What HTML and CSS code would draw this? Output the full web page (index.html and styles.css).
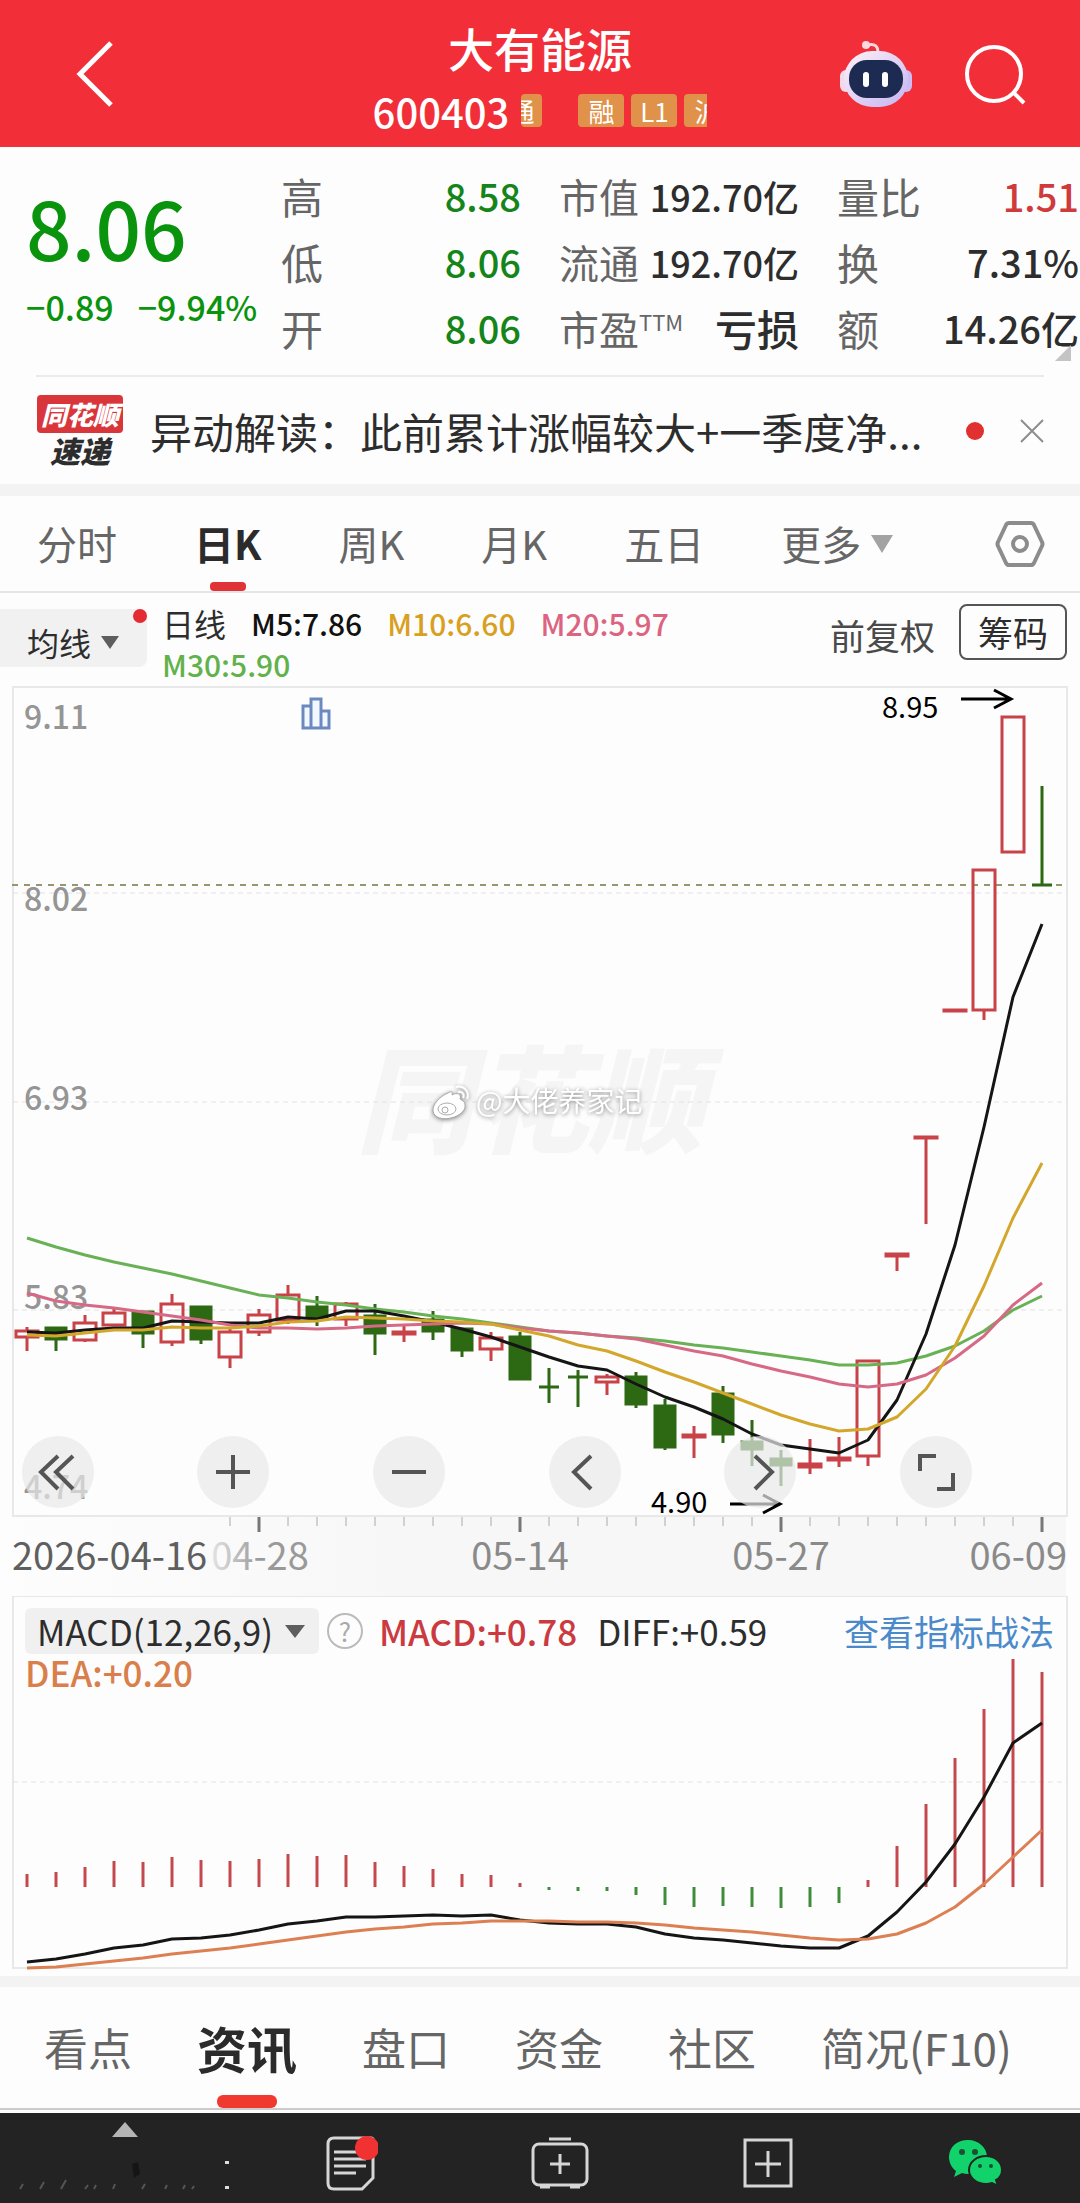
FILE: index.html
```html
<!DOCTYPE html>
<html lang="zh-CN">
<head>
<meta charset="utf-8">
<meta name="viewport" content="width=device-width, initial-scale=1">
<title>大有能源 600403</title>
<link rel="stylesheet" href="styles.css">
</head>
<body>
<header class="topbar">
  <button class="icon-btn back" aria-label="返回">
    <svg width="40" height="70" viewBox="0 0 40 70"><path d="M36 4 5 35l31 31" fill="none" stroke="#fff" stroke-width="5"/></svg>
  </button>
  <div class="stock">
    <h1 class="stock-name">大有能源</h1>
    <div class="stock-sub">
      <span class="stock-code">600403</span>
      <div class="tags">
        <span class="tag tag-cut-left">通</span>
        <span class="tag tag-margin">融</span>
        <span class="tag">L1</span>
        <span class="tag">沪</span>
      </div>
    </div>
  </div>
  <div class="top-actions">
    <button class="icon-btn" aria-label="智能助手">
      <svg width="72" height="68" viewBox="0 0 72 68">
        <defs><linearGradient id="shell" x1="0" y1="0" x2="1" y2="1"><stop offset="0" stop-color="#fff2f7"/><stop offset="1" stop-color="#c3b5f2"/></linearGradient></defs>
        <path d="M27 5c8-2 11 1 11 8" fill="none" stroke="#ffd9de" stroke-width="3"/>
        <circle cx="26" cy="5" r="4" fill="#ffd9de"/>
        <rect x="0" y="30" width="12" height="22" rx="6" fill="#f3d9ec"/>
        <rect x="60" y="30" width="12" height="22" rx="6" fill="#cdbcf4"/>
        <rect x="4" y="11" width="64" height="56" rx="28" fill="url(#shell)"/>
        <rect x="9" y="20" width="54" height="38" rx="18" fill="#1d2b52"/>
        <rect x="23" y="32" width="6" height="15" rx="3" fill="#fff"/>
        <rect x="42" y="32" width="6" height="15" rx="3" fill="#fff"/>
      </svg>
    </button>
    <button class="icon-btn" aria-label="搜索">
      <svg width="62" height="62" viewBox="0 0 62 62"><g fill="none" stroke="#fff" stroke-width="4"><circle cx="30" cy="31" r="27"/><path d="m49 49 11 11"/></g></svg>
    </button>
  </div>
</header>

<main>
<section class="quote">
  <div class="price">
    <div class="price-now">8.06</div>
    <div class="price-change"><span>−0.89</span><span>−9.94%</span></div>
  </div>
  <dl class="stats">
    <div><dt>高</dt><dd class="down">8.58</dd></div>
    <div><dt>低</dt><dd class="down">8.06</dd></div>
    <div><dt>开</dt><dd class="down">8.06</dd></div>
  </dl>
  <dl class="stats stats-mid">
    <div><dt>市值</dt><dd>192.70亿</dd></div>
    <div><dt>流通</dt><dd>192.70亿</dd></div>
    <div><dt>市盈<sup>TTM</sup></dt><dd class="loss">亏损</dd></div>
  </dl>
  <dl class="stats">
    <div><dt>量比</dt><dd class="up">1.51</dd></div>
    <div><dt>换</dt><dd>7.31%</dd></div>
    <div><dt>额</dt><dd>14.26亿</dd></div>
  </dl>
  <svg class="corner" width="16" height="16" viewBox="0 0 16 16"><path d="M16 0v16H0z" fill="#c4c4c4"/></svg>
</section>

<section class="news">
  <div class="news-logo">
    <span class="logo-top">同花顺</span>
    <span class="logo-bottom">速递</span>
  </div>
  <a class="news-title" href="#news">异动解读：此前累计涨幅较大+一季度净...</a>
  <span class="news-dot"></span>
  <button class="icon-btn" aria-label="关闭">
    <svg width="24" height="24" viewBox="0 0 24 24"><path d="m1 1 22 22M23 1 1 23" stroke="#8d8d8d" stroke-width="2"/></svg>
  </button>
</section>

<nav class="period">
  <a href="#m">分时</a>
  <a class="active" href="#d">日K</a>
  <a href="#w">周K</a>
  <a href="#mo">月K</a>
  <a href="#5d">五日</a>
  <button class="more">更多<svg width="22" height="18" viewBox="0 0 22 18"><path d="M0 0h22L11 18z" fill="#a3a3a3"/></svg></button>
  <button class="icon-btn gear" aria-label="设置">
    <svg width="50" height="48" viewBox="0 0 50 48"><g fill="none" stroke="#8c8c8c" stroke-width="4"><path d="M14 3h22q2 0 3 2l8 17q1 2 0 4l-8 17q-1 2-3 2H14q-2 0-3-2L3 26q-1-2 0-4l8-17q1-2 3-2z"/><circle cx="25" cy="24" r="7"/></g></svg>
  </button>
</nav>

<section class="ma">
  <button class="ma-select">均线<svg width="18" height="13" viewBox="0 0 18 13"><path d="M0 0h18L9 13z" fill="#5e5e5e"/></svg></button>
  <div class="ma-legend">
    <span class="ma-name">日线</span>
    <span class="m5">M5:7.86</span>
    <span class="m10">M10:6.60</span>
    <span class="m20">M20:5.97</span>
    <span class="m30">M30:5.90</span>
  </div>
  <button class="adjust">前复权</button>
  <button class="chips">筹码</button>
</section>

<section class="kline">
  <svg class="plot" viewBox="0 687 1080 910" role="img" aria-label="日K线图">
    <defs>
      <linearGradient id="axisFade" x1="0" x2="1"><stop offset="0" stop-color="#fdfdfd"/><stop offset=".4" stop-color="#f7f7f7"/></linearGradient>
      <linearGradient id="dateFade" x1="0" x2="1"><stop offset="0" stop-color="#e4e4e4"/><stop offset=".5" stop-color="#999"/></linearGradient>
    </defs>
    <rect x="0" y="1518" width="1066" height="79" fill="url(#axisFade)"/>
    <text class="brand-mark" x="356" y="1145">同花顺</text>
    <rect class="frame" x="13" y="688" width="1054" height="829"/>
    <path class="grid" d="M13 894H1067M13 1103H1067M13 1311H1067"/>
    <g class="y-labels">
      <text x="24" y="730">9.11</text>
      <text x="24" y="912">8.02</text>
      <text x="24" y="1111">6.93</text>
      <text x="24" y="1310">5.83</text>
      <text x="24" y="1500">4.74</text>
    </g>
    <path d="M12 886H1067" fill="none" stroke="#97976b" stroke-width="2" stroke-dasharray="6 6"/>
    <g fill="#f2f8ff" stroke="#6c89bf" stroke-width="3"><path d="M303 707h8v22h-8zM311 700h10v29h-10zM321 712h8v17h-8z"/></g>
    <g id="candles"></g>
    <g id="averages"></g>
    <g id="ticks"></g>
    <g class="mark">
      <text x="882" y="719">8.95</text>
      <text x="651" y="1514">4.90</text>
      <path d="M961 700h50M994 691l17 9-17 9M730 1505h50M763 1496l17 9-17 9"/>
    </g>
    <g class="dates">
      <text class="date-first" x="12" y="1571">2026-04-16</text>
      <text x="260" y="1571" text-anchor="middle" fill="url(#dateFade)">04-28</text>
      <text x="520" y="1571" text-anchor="middle">05-14</text>
      <text x="781" y="1571" text-anchor="middle">05-27</text>
      <text x="1067" y="1571" text-anchor="end">06-09</text>
    </g>
    <g class="poster">
      <g fill="#fff" stroke="#aaa" stroke-width="1">
        <path d="M448 1094c-8 3-16 12-15 18 1 7 10 9 18 7 9-2 15-8 14-13 0-4-4-5-5-6 2-5-3-7-8-4 1-4-1-4-4-2z"/>
        <ellipse cx="447" cy="1110" rx="9" ry="6"/>
        <circle cx="445" cy="1111" r="3"/>
        <path d="M456 1088c8-2 14 5 11 12M458 1093c4-1 7 2 5 6" fill="none" stroke="#fff" stroke-width="2"/>
      </g>
      <text x="476" y="1113">@大佬养家记</text>
    </g>
  </svg>
  <div class="controls">
    <button aria-label="快退"><svg viewBox="0 0 72 72"><path d="M36 20 19 36l17 17M51 20 34 36l17 17"/></svg></button>
    <button aria-label="放大"><svg viewBox="0 0 72 72"><path d="M36 19v34M19 36h34"/></svg></button>
    <button aria-label="缩小"><svg viewBox="0 0 72 72"><path d="M19 36h34"/></svg></button>
    <button aria-label="向左"><svg viewBox="0 0 72 72"><path d="M42 20 25 36l17 17"/></svg></button>
    <button aria-label="向右"><svg viewBox="0 0 72 72"><path d="m31 20 17 16-17 17"/></svg></button>
    <button aria-label="全屏"><svg viewBox="0 0 72 72"><path d="M20 35V20h16M53 37v16H37"/></svg></button>
  </div>
</section>

<section class="macd">
  <svg class="plot" viewBox="0 1597 1080 380" role="img" aria-label="MACD指标图">
    <rect class="frame" x="13" y="1597" width="1054" height="372"/>
    <path class="grid" d="M13 1783H1067"/>
    <g id="bars"></g>
    <g id="macdLines"></g>
  </svg>
  <div class="macd-head">
    <button class="macd-select">MACD(12,26,9)<svg width="20" height="13" viewBox="0 0 20 13"><path d="M0 0h20L10 13z" fill="#5e5e5e"/></svg></button>
    <button class="help" aria-label="指标说明">?</button>
    <span class="macd-value">MACD:+0.78</span>
    <span class="diff-value">DIFF:+0.59</span>
    <a class="macd-link" href="#guide">查看指标战法</a>
    <span class="dea-value">DEA:+0.20</span>
  </div>
</section>

<nav class="sections">
  <a href="#view">看点</a>
  <a class="active" href="#info">资讯</a>
  <a href="#book">盘口</a>
  <a href="#fund">资金</a>
  <a href="#bbs">社区</a>
  <a href="#f10">简况(F10)</a>
</nav>
</main>

<footer class="toolbar">
  <button class="index-btn" aria-label="指数">
    <svg width="220" height="86" viewBox="0 0 220 86">
      <path d="M98 22 111 7l13 15z" fill="#b5b5b5"/>
      <path d="M118 49l6-2 2 12-6 4z" fill="#151515"/>
      <path d="m6 74 3-5M26 74l4-7M47 74l5-9M71 74l3-4M80 74l2-4M99 74l2-5M128 74l3-5M151 74l2-4M169 74l2-4M178 74l2-3" stroke="#555" stroke-width="2"/>
      <path d="M211 46h4v3h-4zM211 71h4v3h-4z" fill="#ddd"/>
    </svg>
  </button>
  <button aria-label="笔记">
    <svg width="52" height="58" viewBox="0 0 52 58"><g fill="none" stroke="#d6d6d6" stroke-width="3"><path d="M8 4h37q2 0 2 2v38L36 55H8q-6 0-6-6V10q0-6 6-6z"/><path d="M8 18h24M8 25h32M8 32h32M8 39h22"/></g><circle cx="41" cy="14" r="12" fill="#f03232"/></svg>
  </button>
  <button aria-label="交易">
    <svg width="58" height="54" viewBox="0 0 58 54"><g fill="none" stroke="#d6d6d6" stroke-width="3"><rect x="2" y="8" width="54" height="41" rx="6"/><path d="M18 3h22M29 18v20M19 28h20M9 51h10M39 51h10"/></g></svg>
  </button>
  <button aria-label="加自选">
    <svg width="50" height="50" viewBox="0 0 50 50"><g fill="none" stroke="#d6d6d6" stroke-width="3"><path d="M2 2h46v46H2zM25 13v26M12 26h26"/></g></svg>
  </button>
  <button aria-label="微信分享">
    <svg width="56" height="48" viewBox="0 0 56 48">
      <path d="M20 1C9 1 1 8 1 18c0 6 3 11 7 14l-2 6 8-4q3 1 6 1c11 0 19-8 19-17S31 1 20 1z" fill="#12d36b"/>
      <path d="M38 17c-9 0-17 6-17 14s8 14 17 14q3 0 6-1l6 3-2-6c4-2 6-6 6-10 0-8-7-14-16-14z" fill="#12d36b" stroke="#232323" stroke-width="2"/>
      <g fill="#1d4f31"><circle cx="14" cy="13" r="3"/><circle cx="27" cy="13" r="3"/><circle cx="32" cy="27" r="2"/><circle cx="43" cy="27" r="2"/></g>
    </svg>
  </button>
</footer>
<script src="chart.js"></script>
</body>
</html>
```
FILE: styles.css
```css
* { box-sizing: border-box; }
body {
  margin: 0;
  background: #fdfdfd;
  color: #2d2d2d;
  font-family: "Noto Sans CJK SC", "Noto Sans", sans-serif;
}
button {
  margin: 0;
  padding: 0;
  border: 0;
  background: none;
  color: inherit;
  font: inherit;
  white-space: nowrap;
}
a { color: inherit; text-decoration: none; white-space: nowrap; }
svg { display: block; }
dl, dd, h1 { margin: 0; }
.icon-btn { display: flex; }
.up { color: #cf3a3c; }
.down { color: #15851a; }

.topbar {
  display: grid;
  grid-template-columns: 1fr auto 1fr;
  align-items: center;
  height: 147px;
  padding: 0 54px;
  background: #f22e38;
  color: #fff;
}
.back { padding-left: 21px; }
.stock { display: flex; flex-direction: column; gap: 4px; align-items: center; padding-top: 6px; }
.stock-name { font-size: 46px; font-weight: 500; line-height: 64px; }
.stock-sub { display: flex; align-items: center; gap: 12px; height: 56px; }
.stock-code { font-size: 40px; font-weight: 500; line-height: 56px; }
.tags { display: flex; gap: 7px; width: 186px; overflow: hidden; }
.tag {
  flex: none;
  width: 46px;
  border-radius: 4px;
  background: #e0914a;
  font-size: 26px;
  line-height: 33px;
  text-align: center;
}
.tag-cut-left { width: 21px; direction: rtl; padding-right: 8px; overflow: hidden; }
.tag-margin { margin-left: 29px; }
.top-actions { display: flex; align-items: center; justify-content: flex-end; gap: 52px; }

.quote {
  position: relative;
  display: grid;
  grid-template-columns: minmax(0, 243fr) minmax(0, 240fr) minmax(0, 240fr) minmax(0, 242fr);
  column-gap: 38px;
  padding: 16px 1px 14px 0;
}
.price { padding: 12px 0 0 26px; color: #0a930d; font-weight: 500; white-space: nowrap; }
.price-now { font-size: 80px; line-height: 102px; }
.price-change { display: flex; gap: 24px; font-size: 34px; line-height: 60px; }
.stats div { display: flex; align-items: center; justify-content: space-between; line-height: 66px; white-space: nowrap; }
.stats dt { font-size: 42px; color: #666; }
.stats-mid dt { font-size: 40px; }
.stats dd { font-size: 38px; font-weight: 500; }
.stats-mid dd { font-size: 36px; }
.stats .loss { font-size: 42px; }
.stats sup { font-size: 22px; line-height: 22px; }
.corner { position: absolute; right: 9px; bottom: 14px; }

.news {
  display: flex;
  align-items: center;
  height: 109px;
  margin: 0 36px;
  border-top: 2px solid #ececec;
}
.news-logo { display: flex; flex-direction: column; align-items: center; width: 88px; margin-right: 26px; font-style: italic; font-weight: 900; }
.logo-top { width: 86px; border-radius: 4px; background: #d9363c; color: #fff; font-size: 26px; line-height: 38px; text-align: center; }
.logo-bottom { font-size: 30px; line-height: 34px; }
.news-title { flex: 1; font-size: 42px; line-height: 60px; }
.news-dot { width: 18px; height: 18px; margin-right: 36px; border-radius: 50%; background: #e03030; }

.period {
  display: flex;
  align-items: center;
  gap: 77px;
  height: 109px;
  padding: 0 35px 0 37px;
  border-top: 12px solid #f3f3f3;
  border-bottom: 2px solid #e6e6e6;
  color: #666;
  font-size: 40px;
  line-height: 95px;
}
.period .active, .sections .active { position: relative; color: #2b2b2b; font-weight: 700; }
.period .active::after, .sections .active::after {
  content: "";
  position: absolute;
  left: 50%;
  bottom: 0;
  width: 36px;
  height: 9px;
  border-radius: 4px;
  background: #e03338;
  transform: translateX(-50%);
}
.more { display: flex; align-items: center; gap: 10px; }
.gear { margin-left: auto; }

.ma { display: flex; align-items: flex-start; height: 93px; padding: 10px 13px 0 0; }
.ma-select {
  position: relative;
  display: flex;
  align-items: center;
  gap: 10px;
  height: 58px;
  margin: 6px 15px 0 0;
  padding: 8px 28px 0 27px;
  border-radius: 0 8px 8px 0;
  background: #f1f1f1;
  font-size: 32px;
  line-height: 48px;
}
.ma-select::after {
  content: "";
  position: absolute;
  top: 0;
  right: 0;
  width: 14px;
  height: 14px;
  border-radius: 50%;
  background: #e62a34;
}
.ma-legend { display: flex; flex-wrap: wrap; column-gap: 25px; width: 50%; font-size: 30px; font-weight: 500; line-height: 41px; }
.ma-name { font-size: 32px; font-weight: 400; }
.m5 { color: #111; }
.m10 { color: #d8a021; }
.m20 { color: #dc6480; }
.m30 { color: #62b24c; }
.adjust { margin: 6px 24px 0 auto; color: #4a4a4a; font-size: 35px; line-height: 52px; }
.chips { margin-top: 1px; padding: 0 17px; border: 2px solid #555; border-radius: 8px; font-size: 35px; line-height: 52px; }

.kline, .macd { position: relative; }
.plot { width: 100%; height: auto; }
.frame { fill: none; stroke: #e8e8e8; stroke-width: 2; }
.grid { fill: none; stroke: #e2e2e2; stroke-width: 1; stroke-dasharray: 5 4; }
.brand-mark { fill: #f5f5f5; font-size: 116px; font-weight: 900; font-style: italic; }
.y-labels { fill: #959595; font-size: 32px; font-weight: 500; }
.mark { fill: #000; font-size: 29px; }
.mark path { fill: none; stroke: #000; stroke-width: 3; }
.dates { fill: #8a8a8a; font-size: 38px; }
.date-first { fill: #5f5f5f; }
.poster { filter: drop-shadow(0 1px 2px #888); }
.poster text { fill: #fff; font-size: 28px; }
.tick { stroke: #aaa; stroke-width: 1; }
.tick-major { stroke: #777; stroke-width: 3; }
.rise { fill: none; stroke: #c84247; stroke-width: 3; }
.fall { fill: #2d6912; stroke: #2d6912; stroke-width: 3; }
.line { fill: none; stroke-width: 3; stroke-linejoin: round; }
.line-m5, .line-diff { stroke: #151515; }
.line-m10 { stroke: #d3a62c; }
.line-m20 { stroke: #d66a86; }
.line-m30 { stroke: #69b155; }
.line-dea { stroke: #dc7f52; }
.bar-up { stroke: #c5484c; stroke-width: 3; }
.bar-down { stroke: #3f8c3b; stroke-width: 3; }

.controls {
  position: absolute;
  right: 10%;
  bottom: 88px;
  left: 2%;
  display: flex;
  justify-content: space-between;
}
.controls button { width: 72px; height: 72px; border-radius: 50%; background: rgb(232 232 232 / 70%); }
.controls path { fill: none; stroke: #555; stroke-width: 4; }

.macd-head {
  position: absolute;
  top: 12px;
  right: 26px;
  left: 25px;
  display: flex;
  flex-wrap: wrap;
  align-items: center;
  font-size: 35px;
  line-height: 46px;
}
.macd-select { display: flex; align-items: center; gap: 12px; padding: 0 14px 0 12px; border-radius: 6px; background: #f0f0f0; }
.help { width: 36px; height: 36px; margin: 0 16px 0 8px; border: 2px solid #bbb; border-radius: 50%; color: #aaa; font-size: 26px; line-height: 32px; }
.macd-value { margin-right: 20px; color: #cb3a40; font-weight: 500; }
.macd-link { margin-left: auto; color: #4a8aca; }
.dea-value { width: 100%; color: #d97f4c; font-weight: 500; line-height: 36px; }

.sections {
  display: flex;
  gap: 65px;
  padding: 0 44px;
  border-top: 11px solid #f3f3f3;
  border-bottom: 2px solid #ccc;
  color: #666;
  font-size: 44px;
  line-height: 121px;
  white-space: nowrap;
}
.sections .active { font-size: 50px; }
.sections .active::after { width: 60px; height: 13px; border-radius: 6px; background: #f03a30; }

.toolbar {
  display: grid;
  grid-template-columns: 31fr 26fr 26fr 26fr 26fr;
  align-items: center;
  height: 90px;
  margin-top: 3px;
  background: #232323;
}
.toolbar button { display: flex; justify-content: center; padding-top: 9px; }
.toolbar .index-btn { padding-top: 0; }
```
FILE: chart.js
```js
const STEP = 29;
const START = 27;
const xAt = i => START + STEP * i;

// direction, high, body top, body bottom, low (plot units)
const candles = [
  ['r', 1328, 1332, 1338, 1352], ['g', 1328, 1329, 1340, 1352], ['r', 1316, 1324, 1341, 1343],
  ['r', 1310, 1314, 1326, 1326], ['g', 1312, 1313, 1334, 1349], ['r', 1295, 1305, 1343, 1347],
  ['g', 1307, 1308, 1340, 1345], ['r', 1330, 1333, 1358, 1369], ['r', 1310, 1316, 1333, 1337],
  ['r', 1286, 1296, 1321, 1325], ['g', 1297, 1308, 1318, 1327], ['r', 1303, 1305, 1320, 1327],
  ['g', 1305, 1317, 1334, 1356], ['r', 1327, 1333, 1335, 1343], ['g', 1312, 1321, 1332, 1341],
  ['g', 1329, 1330, 1351, 1358], ['r', 1333, 1339, 1350, 1362], ['g', 1333, 1338, 1380, 1381],
  ['g', 1369, 1388, 1388, 1404], ['g', 1371, 1378, 1378, 1408], ['r', 1375, 1378, 1383, 1396],
  ['g', 1373, 1378, 1405, 1409], ['g', 1400, 1407, 1448, 1451], ['r', 1427, 1436, 1438, 1459],
  ['g', 1387, 1395, 1435, 1444], ['g', 1421, 1443, 1450, 1467], ['g', 1451, 1460, 1466, 1487],
  ['r', 1440, 1465, 1468, 1475], ['r', 1438, 1459, 1461, 1468], ['r', 1361, 1362, 1457, 1467],
  ['r', 1254, 1255, 1257, 1272], ['r', 1138, 1138, 1139, 1225], ['r', 1010, 1011, 1012, 1012],
  ['r', 871, 871, 1011, 1021], ['r', 718, 718, 853, 853], ['g', 787, 886, 886, 886]
];

const averages = {
  m30: [1239, 1248, 1256, 1263, 1269, 1275, 1282, 1289, 1296, 1299, 1303, 1306, 1310, 1313, 1317, 1320, 1324, 1328, 1332, 1334, 1337, 1339, 1342, 1346, 1349, 1353, 1357, 1361, 1366, 1366, 1364, 1357, 1347, 1332, 1311, 1297],
  m5: [1333, 1334, 1331, 1329, 1329, 1322, 1323, 1324, 1324, 1318, 1320, 1312, 1312, 1317, 1323, 1330, 1338, 1348, 1358, 1367, 1371, 1385, 1398, 1408, 1420, 1435, 1446, 1450, 1454, 1441, 1401, 1335, 1246, 1128, 998, 925],
  m20: [1294, 1302, 1306, 1309, 1313, 1317, 1321, 1326, 1329, 1329, 1330, 1329, 1327, 1326, 1325, 1324, 1325, 1329, 1332, 1334, 1337, 1340, 1346, 1352, 1357, 1365, 1372, 1378, 1385, 1388, 1385, 1376, 1359, 1337, 1306, 1284],
  m10: [1336, 1337, 1334, 1331, 1331, 1328, 1329, 1329, 1327, 1323, 1322, 1318, 1319, 1320, 1322, 1323, 1325, 1331, 1337, 1346, 1352, 1362, 1373, 1383, 1394, 1405, 1416, 1425, 1432, 1430, 1418, 1390, 1347, 1287, 1219, 1164]
};

const BASE = 1888;
const bars = [1875, 1873, 1868, 1862, 1863, 1858, 1861, 1862, 1860, 1855, 1857, 1856, 1863, 1867, 1870, 1875, 1876, 1884, 1891, 1892, 1892, 1896, 1906, 1908, 1907, 1908, 1909, 1908, 1904, 1881, 1847, 1805, 1759, 1710, 1660, 1673];
const macdLines = {
  diff: [1963, 1960, 1955, 1949, 1946, 1940, 1939, 1936, 1931, 1925, 1922, 1918, 1918, 1917, 1916, 1917, 1916, 1921, 1924, 1925, 1925, 1928, 1935, 1939, 1941, 1944, 1947, 1949, 1949, 1937, 1913, 1883, 1845, 1798, 1744, 1724],
  dea: [1969, 1968, 1965, 1962, 1959, 1955, 1952, 1949, 1945, 1941, 1937, 1933, 1930, 1928, 1925, 1924, 1922, 1922, 1922, 1923, 1923, 1924, 1926, 1929, 1931, 1933, 1936, 1939, 1941, 1940, 1935, 1924, 1908, 1885, 1858, 1831]
};

const fill = (id, markup) => { document.getElementById(id).innerHTML = markup; };
const polylines = set => Object.entries(set).map(([name, ys]) =>
  `<polyline class="line line-${name}" points="${ys.map((y, i) => `${xAt(i)},${y}`).join(' ')}"/>`).join('');

fill('candles', candles.map(([dir, high, top, bottom, low], i) => {
  const x = xAt(i);
  const half = dir === 'r' ? 11 : 10;
  return `<path class="${dir === 'r' ? 'rise' : 'fall'}" d="M${x} ${high}V${top}M${x} ${bottom}V${low}M${x - half} ${top}H${x + half}V${bottom}H${x - half}z"/>`;
}).join(''));
fill('averages', polylines(averages));
fill('ticks', candles.map((c, i) => {
  if (i < 7) return '';
  const major = i % 9 === 8;
  return `<path class="${major ? 'tick-major' : 'tick'}" d="M${xAt(i)} 1518V${major ? 1533 : 1527}"/>`;
}).join(''));
fill('bars', bars.map((y, i) =>
  `<path class="${y < BASE ? 'bar-up' : 'bar-down'}" d="M${xAt(i)} ${BASE}V${y}"/>`).join(''));
fill('macdLines', polylines(macdLines));
```
